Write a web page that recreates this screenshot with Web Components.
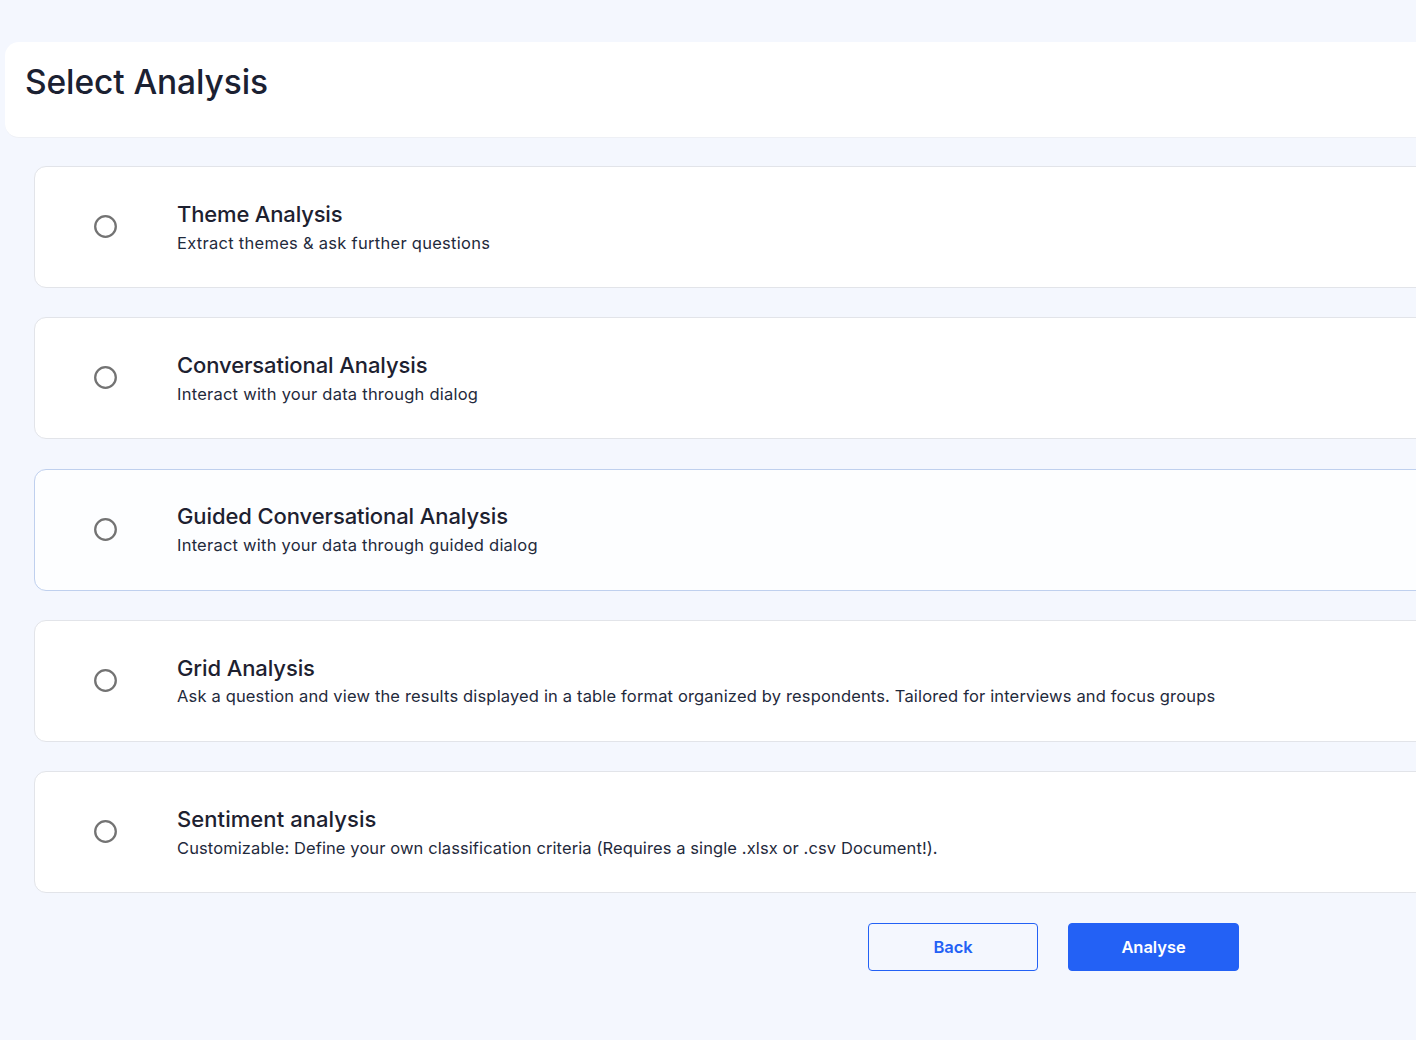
<!DOCTYPE html>
<html><head><meta charset="utf-8"><style>
html,body{margin:0;padding:0;height:1040px;overflow:hidden;background:#f4f7fe}
body{font-family:Inter,"Liberation Sans",sans-serif}
</style></head><body>
<analysis-page>
<option-card style="--ts:-.17px;--ds:.28px" title-text="Theme Analysis" desc="Extract themes &amp; ask further questions"></option-card>
<option-card style="--ts:-.1px;--ds:.24px" title-text="Conversational Analysis" desc="Interact with your data through dialog"></option-card>
<option-card style="--ts:-.1px;--ds:.23px" hovered title-text="Guided Conversational Analysis" desc="Interact with your data through guided dialog"></option-card>
<option-card style="--ts:-.1px;--ds:.16px" title-text="Grid Analysis" desc="Ask a question and view the results displayed in a table format organized by respondents. Tailored for interviews and focus groups"></option-card>
<option-card style="--ts:.07px;--ds:.1px" title-text="Sentiment analysis" desc="Customizable: Define your own classification criteria (Requires a single .xlsx or .csv Document!)."></option-card>
<div slot="actions" style="display:contents">
<action-button>Back</action-button>
<action-button primary>Analyse</action-button>
</div>
</analysis-page>
<script>
class AnalysisPage extends HTMLElement{constructor(){super();this.attachShadow({mode:'open'}).innerHTML=`<style>
:host{display:block;width:1416px;height:1040px;overflow:hidden;box-sizing:border-box;padding-top:42px;color:#1b2132}
header{box-sizing:border-box;width:1600px;height:96px;margin-left:5px;background:#fff;border-radius:14px;border-bottom:1px solid #eef0f5;padding:17px 0 0 20px}
h1{margin:0;font:500 33.5px/46px Inter,"Liberation Sans",sans-serif;letter-spacing:-.1px}
.list{display:flex;flex-direction:column;gap:29.25px;margin:28px 0 0 34px;width:1600px}
.actions{display:flex;justify-content:flex-end;gap:30px;margin-top:30px;padding-right:177px}
</style><header><h1>Select Analysis</h1></header><div class="list"><slot></slot></div><div class="actions"><slot name="actions"></slot></div>`}}
class OptionCard extends HTMLElement{constructor(){super();this.attachShadow({mode:'open'}).innerHTML=`<style>
:host{display:grid;grid-template-columns:142px 1fr;align-items:center;box-sizing:border-box;height:122px;background:#fff;border:1px solid #e2e4e9;border-radius:12px}
:host([hovered]){background:#fdfeff;border-color:#bfd0ee}
svg{display:block;justify-self:start;margin:0 0 1px 59px;width:23px;height:23px}
.t{font:500 22px/30px Inter,"Liberation Sans",sans-serif;letter-spacing:var(--ts,-.1px);color:#1d2130}
.d{font:400 16.5px/24px Inter,"Liberation Sans",sans-serif;letter-spacing:var(--ds,.14px);color:#1f2a3c;white-space:nowrap;margin-top:1.875px}
.text{padding-bottom:.625px}
</style><svg viewBox="0 0 23 23" aria-hidden="true"><circle cx="11.5" cy="11.5" r="10.3" fill="none" stroke="#737373" stroke-width="2.3"/></svg><div class="text"><div class="t"></div><div class="d"></div></div>`;
this.shadowRoot.querySelector('.t').textContent=this.getAttribute('title-text');this.shadowRoot.querySelector('.d').textContent=this.getAttribute('desc');}}
class ActionButton extends HTMLElement{constructor(){super();this.attachShadow({mode:'open'}).innerHTML=`<style>
:host{display:flex;align-items:center;justify-content:center;box-sizing:border-box;width:170px;height:48px;border:1px solid #2361f5;border-radius:4px;color:#2361f5;font:600 16.5px/24px Inter,"Liberation Sans",sans-serif;letter-spacing:-.05px}
:host([primary]){width:171px;background:#2361f5;color:#fff}
</style><slot></slot>`}}
customElements.define('analysis-page',AnalysisPage);customElements.define('option-card',OptionCard);customElements.define('action-button',ActionButton);
</script>
</body></html>
